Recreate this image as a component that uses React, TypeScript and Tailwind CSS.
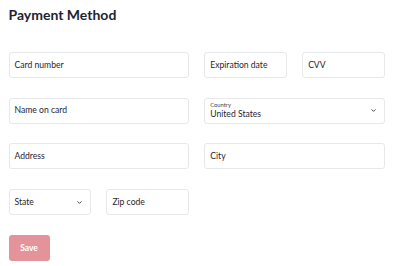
import { ChevronDown } from 'lucide-react'

function Field({ label, className = '' }: { label: string; className?: string }) {
  return (
    <div
      className={`flex h-[26px] items-center rounded-[3px] border border-[#e6e8eb] bg-white px-[5px] text-[8.6px] text-[#1f2430] ${className}`}
    >
      {label}
    </div>
  )
}

export default function App() {
  return (
    <div
      className="w-[395px] h-[266px] bg-white pl-[8.5px] pr-[10px] pt-[5px]"
      style={{ fontFamily: 'Lato, sans-serif' }}
    >
      <h1 className="text-[14px] font-bold leading-[20px] text-[#1c2434]">Payment Method</h1>
      <div className="mt-[27px] grid grid-cols-4 gap-x-[15px] gap-y-[19.7px]">
        <Field label="Card number" className="col-span-2" />
        <Field label="Expiration date" />
        <Field label="CVV" />

        <Field label="Name on card" className="col-span-2" />
        <div className="col-span-2 flex h-[26px] items-center justify-between rounded-[3px] border border-[#e6e8eb] bg-white pl-[5px] pr-[7px] text-[#1f2430]">
          <div className="flex flex-col leading-none">
            <span className="text-[5.8px] text-[#3a4150]">Country</span>
            <span className="mt-[2px] text-[8.6px]">United States</span>
          </div>
          <ChevronDown className="h-[7px] w-[7px] text-[#2b3240]" strokeWidth={3} />
        </div>

        <Field label="Address" className="col-span-2" />
        <Field label="City" className="col-span-2" />

        <div className="flex h-[26px] items-center justify-between rounded-[3px] border border-[#e6e8eb] bg-white pl-[5px] pr-[7px] text-[8.6px] text-[#1f2430]">
          <span>State</span>
          <ChevronDown className="h-[7px] w-[7px] text-[#2b3240]" strokeWidth={3} />
        </div>
        <Field label="Zip code" />
      </div>
      <button className="mt-[20px] flex h-[26px] w-[41px] items-center justify-center rounded-[3px] bg-[#e5939a] text-[8.5px] font-bold text-white">
        Save
      </button>
    </div>
  )
}
